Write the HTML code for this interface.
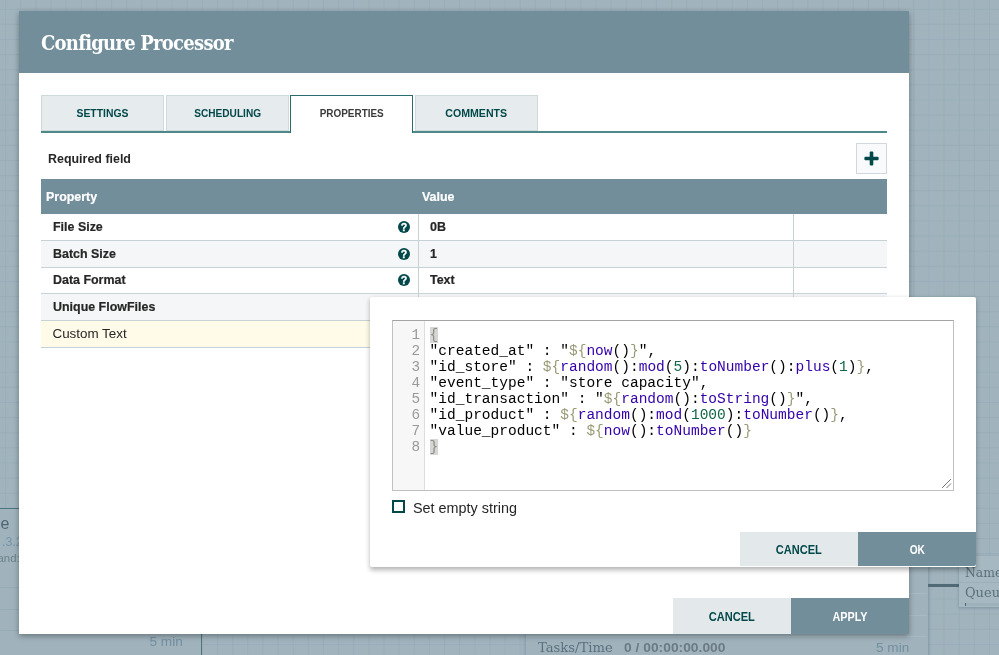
<!DOCTYPE html>
<html lang="en">
<head>
<meta charset="utf-8">
<title>Configure Processor</title>
<style>
*{box-sizing:border-box;margin:0;padding:0}
html,body{width:999px;height:655px;overflow:hidden}
body{position:relative;font-family:"Liberation Sans",sans-serif;background-color:#a1b4be;
}
#all{position:absolute;left:0;top:0;width:999px;height:655px;overflow:hidden;will-change:transform}
.abs{position:absolute}
/* background canvas items */
.proc{position:absolute;background:#9fb3bd;border:1px solid #7f9aa6}
.bgt{position:absolute;white-space:nowrap}
/* dialog */
#dlg{position:absolute;left:19px;top:11px;width:890px;height:623px;background:#fff;box-shadow:0 2px 6px rgba(0,0,0,.35)}
#hdr{position:absolute;left:0;top:0;width:890px;height:62px;background:#728e9b}
#hdr span{position:absolute;left:22px;top:20px;font-family:"DejaVu Serif Condensed","DejaVu Serif","Liberation Serif",serif;font-weight:bold;font-size:20px;color:#fff;white-space:nowrap;letter-spacing:-.75px;line-height:24px}
.tab{position:absolute;top:84px;height:36px;background:#e6ebed;border:1px solid #cfdadd;color:#004849;font-size:11.4px;font-weight:bold;text-align:center;line-height:35px}
.sx{display:inline-block;transform-origin:center center;white-space:nowrap}
.sl{display:inline-block;transform-origin:left center;white-space:nowrap;transform:scaleX(.957)}
.tab.sel{background:#fff;border:1.2px solid #296c6d;border-bottom:none;color:#3a3a3a;height:38px;z-index:2}
#tabline{position:absolute;left:22px;top:120.3px;width:846px;height:1.6px;background:#4f8889}
#req{position:absolute;left:29px;top:140px;font-size:13px;font-weight:bold;color:#262626;white-space:nowrap;transform:scaleX(.957);transform-origin:left center}
#plus{position:absolute;left:837px;top:132px;width:31px;height:31px;background:#f9fafb;border:1px solid #cfd8dc}
#thead{position:absolute;left:22px;top:168px;width:846px;height:35px;background:#728e9b;color:#fff;font-weight:bold;font-size:13px;line-height:36px;-webkit-text-stroke:.2px #fff}
.row{position:absolute;left:22px;width:846px;height:26.8px;font-size:13px;font-weight:bold;color:#262626;line-height:26px;-webkit-text-stroke:.2px #262626}
.row .n{position:absolute;left:11.5px;top:0;white-space:nowrap;transform:scaleX(.957);transform-origin:left center}
.row .v{position:absolute;left:389px;top:0;white-space:nowrap;transform:scaleX(.957);transform-origin:left center}
.row .q{position:absolute;left:357px;top:7px;width:12px;height:12px}
.vline{position:absolute;width:1px;background:#c7d2d7}
.hline{position:absolute;left:22px;width:846px;height:1px;background:#c7d2d7}
.btn{position:absolute;height:35px;width:118px;text-align:center;line-height:35px;font-size:12.35px;font-weight:bold}
.btn.sec{background:#e3e8eb;color:#004849}
.btn.pri{background:#728e9b;color:#fff}
/* editor popup */
#pop{position:absolute;left:369.5px;top:297px;width:606.2px;height:269.6px;background:#fff;border-radius:2px;box-shadow:0 2.5px 5px rgba(0,0,0,.3)}
#ed{position:absolute;left:22.5px;top:22.5px;width:562px;height:171px;border:1px solid #c0c0c0;border-top-color:#a4a4a4;background:#fff}
#gut{position:absolute;left:0;top:0;width:32px;height:169px;background:#f7f7f7;border-right:1px solid #ddd}
.ln{position:absolute;left:0;width:27px;text-align:right;font-family:"Liberation Mono",monospace;font-size:14.3px;color:#999;line-height:16px;height:16px}
.cl{position:absolute;left:36.6px;font-family:"Liberation Mono",monospace;font-size:14.53px;color:#000;line-height:16px;height:16px;white-space:pre}
.cl .d{color:#997}
.cl .f{color:#30a}
.cl .m{color:#164}
.cl .b{color:#8e8e84;background:#d6d6d6}
#chk{position:absolute;left:22.5px;top:203.2px;width:13px;height:13px;border:2px solid #004849;background:#fff}
#chkl{position:absolute;left:43.5px;top:203px;font-size:14.4px;color:#262626;white-space:nowrap}
</style>
</head>
<body>
<div id="all">

<!-- canvas background items seen through the glass pane -->
<svg class="abs" style="left:0;top:0" width="999" height="655" viewBox="0 0 999 655"><path d="M5.60 0V655M20.74 0V655M35.87 0V655M51.01 0V655M66.15 0V655M81.28 0V655M96.42 0V655M111.56 0V655M126.70 0V655M141.83 0V655M156.97 0V655M172.11 0V655M187.24 0V655M202.38 0V655M217.52 0V655M232.66 0V655M247.79 0V655M262.93 0V655M278.07 0V655M293.20 0V655M308.34 0V655M323.48 0V655M338.61 0V655M353.75 0V655M368.89 0V655M384.03 0V655M399.16 0V655M414.30 0V655M429.44 0V655M444.57 0V655M459.71 0V655M474.85 0V655M489.98 0V655M505.12 0V655M520.26 0V655M535.40 0V655M550.53 0V655M565.67 0V655M580.81 0V655M595.94 0V655M611.08 0V655M626.22 0V655M641.35 0V655M656.49 0V655M671.63 0V655M686.76 0V655M701.90 0V655M717.04 0V655M732.18 0V655M747.31 0V655M762.45 0V655M777.59 0V655M792.72 0V655M807.86 0V655M823.00 0V655M838.14 0V655M853.27 0V655M868.41 0V655M883.55 0V655M898.68 0V655M913.82 0V655M928.96 0V655M944.09 0V655M959.23 0V655M974.37 0V655M989.50 0V655M0 9.20H999M0 24.32H999M0 39.45H999M0 54.58H999M0 69.70H999M0 84.83H999M0 99.95H999M0 115.08H999M0 130.20H999M0 145.32H999M0 160.45H999M0 175.57H999M0 190.70H999M0 205.82H999M0 220.95H999M0 236.07H999M0 251.20H999M0 266.32H999M0 281.45H999M0 296.57H999M0 311.70H999M0 326.82H999M0 341.95H999M0 357.07H999M0 372.20H999M0 387.32H999M0 402.45H999M0 417.57H999M0 432.70H999M0 447.82H999M0 462.95H999M0 478.07H999M0 493.20H999M0 508.32H999M0 523.45H999M0 538.58H999M0 553.70H999M0 568.83H999M0 583.95H999M0 599.08H999M0 614.20H999M0 629.33H999M0 644.45H999" stroke="#94aab5" stroke-width="1" fill="none" opacity=".55"/></svg>
<!-- left (selected) processor -->
<div class="abs" style="left:-201px;top:507.5px;width:402.7px;height:170px;background:#a0b3bd;border:1.2px solid #4a7680"></div>
<div class="abs" style="left:-200px;top:587px;width:400px;height:1px;background:#95abb6"></div>
<div class="abs" style="left:-200px;top:608.7px;width:400px;height:1px;background:#95abb6"></div>
<div class="abs" style="left:-200px;top:630.4px;width:400px;height:1px;background:#95abb6"></div>
<div class="bgt" style="left:0.5px;top:515px;font-size:16px;line-height:18px;color:#4f6571">e</div>
<div class="bgt" style="left:2px;top:533.5px;font-size:12.4px;line-height:16px;color:#7496a8">.3.2</div>
<div class="bgt" style="left:-2.5px;top:550.7px;font-size:11.4px;line-height:14px;color:#6d828d">and: nar</div>
<div class="bgt" style="left:149.5px;top:634px;font-size:13.6px;line-height:16px;color:#7290a0">5 min</div>

<!-- lower processor -->
<div class="abs" style="left:526px;top:512px;width:402px;height:147px;background:#a0b3bd;box-shadow:0 1px 4px rgba(40,70,85,.35)"></div>
<div class="abs" style="left:526px;top:593px;width:401px;height:1px;background:#a9bac3"></div>
<div class="abs" style="left:526px;top:614.7px;width:401px;height:1px;background:#a9bac3"></div>
<div class="abs" style="left:526px;top:636.4px;width:401px;height:1px;background:#a9bac3"></div>
<div class="bgt" style="left:538px;top:639.2px;font-family:'DejaVu Serif','Liberation Serif',serif;font-size:12.3px;line-height:18px;color:#5a707c;transform:scaleX(1.07);transform-origin:left center">Tasks/Time</div>
<div class="bgt" style="left:624px;top:640.2px;font-size:13.6px;line-height:16px;font-weight:bold;color:#6b7b84;transform:scaleX(1.017);transform-origin:left center">0 / 00:00:00.000</div>
<div class="bgt" style="left:876px;top:640px;font-size:13.6px;line-height:16px;color:#7290a0">5 min</div>

<!-- connection + label -->
<div class="abs" style="left:928px;top:584.3px;width:32px;height:3px;background:#526a75"></div>
<div class="abs" style="left:959px;top:556px;width:45px;height:51px;background:#a6b8c1;box-shadow:0 1px 3px rgba(40,70,85,.3)"></div>
<div class="abs" style="left:959px;top:582px;width:45px;height:1px;background:#9cb0ba"></div>
<div class="abs" style="left:965px;top:602.5px;width:40px;height:3.5px;background:#9db1bb"></div>
<div class="abs" style="left:965px;top:602.5px;width:1.2px;height:3.5px;background:#4f6671"></div>
<div class="bgt" style="left:965px;top:564px;font-family:'DejaVu Serif','Liberation Serif',serif;font-size:12px;line-height:18px;color:#5a707c;transform:scaleX(1.03);transform-origin:left center">Name</div>
<div class="bgt" style="left:965px;top:584.3px;font-family:'DejaVu Serif','Liberation Serif',serif;font-size:12px;line-height:18px;color:#5a707c;transform:scaleX(1.08);transform-origin:left center">Queued</div>

<!-- Configure Processor dialog -->
<div id="dlg">
  <div id="hdr"><span>Configure Processor</span></div>

  <div class="tab" style="left:22px;width:123px"><span class="sx" style="transform:scaleX(.912)">SETTINGS</span></div>
  <div class="tab" style="left:147px;width:123px"><span class="sx" style="transform:scaleX(.888)">SCHEDULING</span></div>
  <div class="tab sel" style="left:271px;width:123px"><span class="sx" style="transform:scaleX(.872)">PROPERTIES</span></div>
  <div class="tab" style="left:396px;width:123px"><span class="sx" style="transform:scaleX(.931)">COMMENTS</span></div>
  <div id="tabline"></div>

  <div id="req">Required field</div>
  <div id="plus">
    <svg width="29" height="29" viewBox="0 0 29 29"><rect x="7.4" y="12.7" width="14.2" height="3.6" rx="1.1" fill="#004849"/><rect x="12.7" y="7.4" width="3.6" height="14.2" rx="1.1" fill="#004849"/></svg>
  </div>

  <div id="thead"><span class="abs sl" style="left:5px">Property</span><span class="abs sl" style="left:381px">Value</span></div>

  <div class="row" style="top:203px;background:#fff"><span class="n">File Size</span>
    <svg class="q" viewBox="0 0 12 12"><circle cx="6" cy="6" r="6" fill="#004849"/><text x="6" y="9.8" text-anchor="middle" font-family="Liberation Sans,sans-serif" font-weight="bold" font-size="10.6" fill="#fff" stroke="#fff" stroke-width=".3">?</text></svg>
    <span class="v">0B</span></div>
  <div class="row" style="top:229.7px;background:#f4f6f7"><span class="n">Batch Size</span>
    <svg class="q" viewBox="0 0 12 12"><circle cx="6" cy="6" r="6" fill="#004849"/><text x="6" y="9.8" text-anchor="middle" font-family="Liberation Sans,sans-serif" font-weight="bold" font-size="10.6" fill="#fff" stroke="#fff" stroke-width=".3">?</text></svg>
    <span class="v">1</span></div>
  <div class="row" style="top:256.4px;background:#fff"><span class="n">Data Format</span>
    <svg class="q" viewBox="0 0 12 12"><circle cx="6" cy="6" r="6" fill="#004849"/><text x="6" y="9.8" text-anchor="middle" font-family="Liberation Sans,sans-serif" font-weight="bold" font-size="10.6" fill="#fff" stroke="#fff" stroke-width=".3">?</text></svg>
    <span class="v">Text</span></div>
  <div class="row" style="top:283.1px;background:#f4f6f7"><span class="n">Unique FlowFiles</span></div>
  <div class="row" style="top:309.8px;background:#fffbe8;font-weight:normal;font-size:13.4px;-webkit-text-stroke:0"><span class="n" style="transform:none">Custom Text</span></div>
  <div class="hline" style="top:229px"></div>
  <div class="hline" style="top:255.7px"></div>
  <div class="hline" style="top:282.4px"></div>
  <div class="hline" style="top:309.1px"></div>
  <div class="hline" style="top:335.8px"></div>
  <div class="vline" style="left:398.5px;top:203px;height:134px"></div>
  <div class="vline" style="left:774px;top:203px;height:134px"></div>

  <div class="btn sec" style="left:654px;top:587px;height:36px;line-height:38px"><span class="sx" style="transform:scaleX(.897)">CANCEL</span></div>
  <div class="btn pri" style="left:772px;top:587px;height:36px;line-height:38px"><span class="sx" style="transform:scaleX(.879)">APPLY</span></div>
</div>

<!-- property value editor popup -->
<div id="pop">
  <div id="ed">
    <div id="gut"></div>
    <div class="ln" style="top:6px">1</div>
    <div class="ln" style="top:22px">2</div>
    <div class="ln" style="top:38px">3</div>
    <div class="ln" style="top:54px">4</div>
    <div class="ln" style="top:70px">5</div>
    <div class="ln" style="top:86px">6</div>
    <div class="ln" style="top:102px">7</div>
    <div class="ln" style="top:118px">8</div>
    <div class="cl" style="top:6px"><span class="b">{</span></div>
    <div class="cl" style="top:22px">"created_at" : "<span class="d">${</span><span class="f">now</span>()<span class="d">}</span>",</div>
    <div class="cl" style="top:38px">"id_store" : <span class="d">${</span><span class="f">random</span>():<span class="f">mod</span>(<span class="m">5</span>):<span class="f">toNumber</span>():<span class="f">plus</span>(<span class="m">1</span>)<span class="d">}</span>,</div>
    <div class="cl" style="top:54px">"event_type" : "store capacity",</div>
    <div class="cl" style="top:70px">"id_transaction" : "<span class="d">${</span><span class="f">random</span>():<span class="f">toString</span>()<span class="d">}</span>",</div>
    <div class="cl" style="top:86px">"id_product" : <span class="d">${</span><span class="f">random</span>():<span class="f">mod</span>(<span class="m">1000</span>):<span class="f">toNumber</span>()<span class="d">}</span>,</div>
    <div class="cl" style="top:102px">"value_product" : <span class="d">${</span><span class="f">now</span>():<span class="f">toNumber</span>()<span class="d">}</span></div>
    <div class="cl" style="top:118px"><span class="b">}</span></div>
    <svg class="abs" style="right:1px;bottom:1px" width="11" height="11" viewBox="0 0 11 11"><path d="M10 1L1 10M10 5.5L5.5 10" stroke="#777" stroke-width="1"/></svg>
  </div>
  <div id="chk"></div>
  <div id="chkl">Set empty string</div>
  <div class="btn sec" style="left:370.5px;top:234.6px;height:34.3px;line-height:37.5px"><span class="sx" style="transform:scaleX(.897)">CANCEL</span></div>
  <div class="btn pri" style="left:488.4px;top:234.6px;height:34.3px;width:117.8px;line-height:37.5px;border-bottom-right-radius:2px"><span class="sx" style="transform:scaleX(.823)">OK</span></div>
</div>

</div>
</body>
</html>
